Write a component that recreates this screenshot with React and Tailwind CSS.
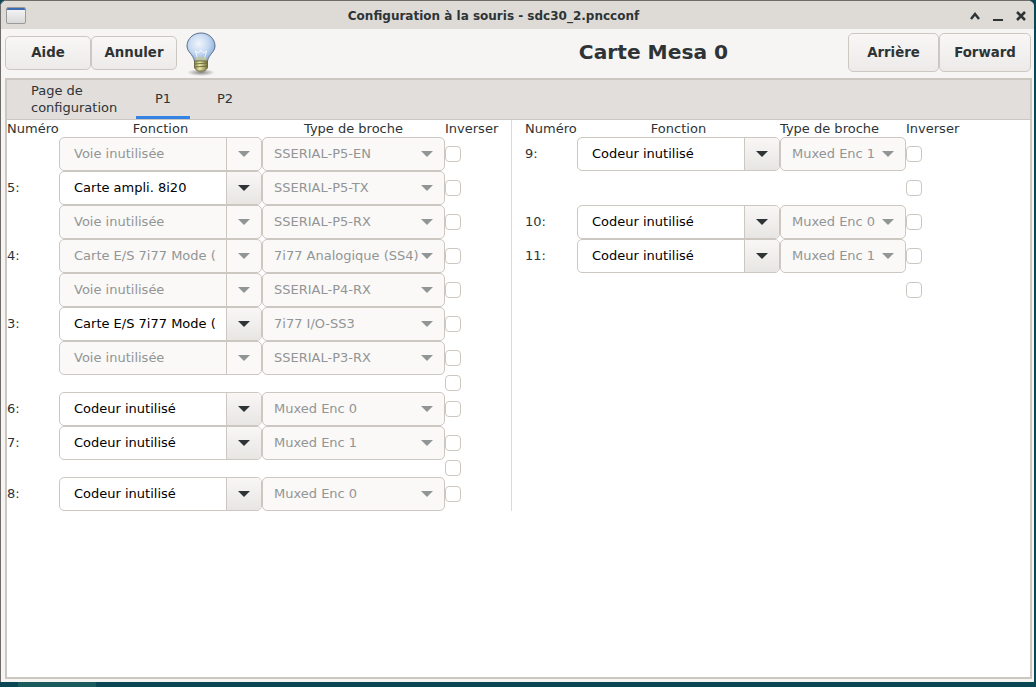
import React from "react";

const leftRows = [
  { h: 34, fn: "Voie inutilisée", type: "SSERIAL-P5-EN" },
  { h: 34, num: "5:", fn: "Carte ampli. 8i20", active: true, type: "SSERIAL-P5-TX" },
  { h: 34, fn: "Voie inutilisée", type: "SSERIAL-P5-RX" },
  { h: 34, num: "4:", fn: "Carte E/S 7i77 Mode (", type: "7i77 Analogique (SS4)" },
  { h: 34, fn: "Voie inutilisée", type: "SSERIAL-P4-RX" },
  { h: 34, num: "3:", fn: "Carte E/S 7i77 Mode (", active: true, type: "7i77 I/O-SS3" },
  { h: 34, fn: "Voie inutilisée", type: "SSERIAL-P3-RX" },
  { h: 17 },
  { h: 34, num: "6:", fn: "Codeur inutilisé", active: true, type: "Muxed Enc 0" },
  { h: 34, num: "7:", fn: "Codeur inutilisé", active: true, type: "Muxed Enc 1" },
  { h: 17 },
  { h: 34, num: "8:", fn: "Codeur inutilisé", active: true, type: "Muxed Enc 0" },
];

const rightRows = [
  { h: 34, num: "9:", fn: "Codeur inutilisé", active: true, type: "Muxed Enc 1" },
  { h: 34 },
  { h: 34, num: "10:", fn: "Codeur inutilisé", active: true, type: "Muxed Enc 0" },
  { h: 34, num: "11:", fn: "Codeur inutilisé", active: true, type: "Muxed Enc 1" },
  { h: 34 },
];

function Arrow({ dim }) {
  return (
    <svg width="12" height="6" viewBox="0 0 12 6" className="shrink-0">
      <path d="M0 0h12L6 6z" fill={dim ? "#929595" : "#2e3436"} />
    </svg>
  );
}

function FnCombo({ text, active }) {
  return (
    <div
      className={`flex h-full w-[203px] shrink-0 rounded-[5px] border border-[#cdc7c2] ${
        active ? "bg-white text-black" : "bg-[#faf9f8] text-[#929595]"
      }`}
    >
      <div className="flex-1 overflow-hidden whitespace-nowrap pl-[14px] pr-[16px] leading-[32px]">
        {text}
      </div>
      <div
        className={`flex w-[35px] items-center justify-center rounded-r-[4px] border-l border-[#cdc7c2] ${
          active ? "bg-gradient-to-b from-[#f8f7f6] to-[#e8e6e3]" : ""
        }`}
      >
        <Arrow dim={!active} />
      </div>
    </div>
  );
}

function TypeCombo({ text, width }) {
  return (
    <div
      className={`flex h-full ${width} shrink-0 items-center justify-between rounded-[5px] border border-[#cdc7c2] bg-[#faf9f8] pl-[11px] pr-[11px] text-[#929595]`}
    >
      <span className="overflow-hidden whitespace-nowrap">{text}</span>
      <Arrow dim />
    </div>
  );
}

function Check() {
  return <div className="h-[16px] w-[16px] shrink-0 rounded-[4px] border border-[#cdc7c2] bg-white" />;
}

function Row({ row, typeWidth }) {
  return (
    <div
      className={`flex ${row.h === 34 ? "h-[34px] items-center" : "h-[17px] items-start"}`}
    >
      <div className="w-[52px] shrink-0 text-[#2e3436]">{row.num}</div>
      {row.fn ? (
        <>
          <FnCombo text={row.fn} active={row.active} />
          <TypeCombo text={row.type} width={typeWidth} />
        </>
      ) : (
        <div className={typeWidth === "w-[183px]" ? "w-[386px]" : "w-[329px]"} />
      )}
      <Check />
    </div>
  );
}

function Header({ typeWidth, typeAlign }) {
  return (
    <div className="flex h-[17px] items-center text-[#2e3436]">
      <div className="w-[52px] shrink-0">Numéro</div>
      <div className="w-[203px] shrink-0 text-center">Fonction</div>
      <div className={`${typeWidth} shrink-0 whitespace-nowrap ${typeAlign}`}>Type de broche</div>
      <div>Inverser</div>
    </div>
  );
}

function Bulb() {
  return (
    <svg width="30" height="44" viewBox="0 0 30 44">
      <defs>
        <radialGradient id="glass" cx="0.42" cy="0.38" r="0.65">
          <stop offset="0" stopColor="#f1f6fc" />
          <stop offset="0.55" stopColor="#c6d9f1" />
          <stop offset="1" stopColor="#86abdd" />
        </radialGradient>
        <linearGradient id="base" x1="0" x2="1" y1="0" y2="0">
          <stop offset="0" stopColor="#8c8a4e" />
          <stop offset="0.4" stopColor="#e9e6a8" />
          <stop offset="1" stopColor="#77743f" />
        </linearGradient>
        <radialGradient id="shade">
          <stop offset="0" stopColor="#000" stopOpacity="0.45" />
          <stop offset="1" stopColor="#000" stopOpacity="0" />
        </radialGradient>
      </defs>
      <ellipse cx="15" cy="40.500" rx="14" ry="3.500" fill="url(#shade)" />
      <path
        d="M15 1C7 1 1 7 1 14c0 6 6 8 7.500 15h13C23 22 29 20 29 14 29 7 23 1 15 1z"
        fill="url(#glass)"
        stroke="#5b7189"
      />
      <path d="M11.500 27l-2-8 3 2 2.500-3 2.500 3 3-2-2 8" fill="none" stroke="#fff" strokeWidth="0.8" />
      <path d="M10 25h10l1 4H9z" fill="#c9c68a" opacity="0.7" />
      <path d="M8.500 29h13v7l-3 3h-7l-3-3z" fill="url(#base)" stroke="#5c5a2e" strokeWidth="0.8" />
      <path d="M8.500 32l13-1M8.500 35l13-1" stroke="#5c5a2e" strokeWidth="0.8" />
    </svg>
  );
}

function Btn({ children, className }) {
  return (
    <div
      className={`flex items-center justify-center rounded-[5px] border border-[#cdc7c2] bg-gradient-to-b from-[#f8f7f6] to-[#edebe9] text-[13.33px] font-bold text-[#2e3436] ${className}`}
    >
      {children}
    </div>
  );
}

function Tab({ children, active, className }) {
  return (
    <div
      className={`flex h-[39px] items-center border-b-[3px] leading-[17px] text-[#2e3436] ${
        active ? "border-[#3584e4]" : "border-transparent"
      } ${className}`}
    >
      {children}
    </div>
  );
}

export default function App() {
  return (
    <div className="flex h-[687px] w-[1036px] flex-col overflow-hidden bg-[#0b4655] text-[13px] font-['DejaVu_Sans',sans-serif]">
      <div className="mr-[2px] flex h-[682px] shrink-0 flex-col rounded-t-[6px] border-l border-t border-[#6e6c69] bg-[#f6f5f4]">
        {/* Title bar */}
        <div className="flex h-[28px] shrink-0 items-center rounded-t-[6px] bg-[#dedbd7] pl-[5px] pr-[8px]">
          <div className="mt-px h-[17px] w-[20px] overflow-hidden rounded-[2px] border border-[#9a9a9a] bg-gradient-to-b from-[#f7f7f7] to-[#d9d9d9]">
            <div className="h-[2px] bg-[#3d6bb0]" />
          </div>
          <div className="flex-1 pr-[9px] pt-[2px] text-center text-[12px] font-bold text-[#2e3436]">
            Configuration à la souris - sdc30_2.pncconf
          </div>
          <div className="flex items-center gap-[13px] pt-[2px]">
            <svg width="10" height="10" viewBox="0 0 10 10">
              <path d="M1 8l4-5 4 5" fill="none" stroke="#2e3436" strokeWidth="2.500" />
            </svg>
            <svg width="10" height="10" viewBox="0 0 10 10">
              <path d="M0 9h10" fill="none" stroke="#2e3436" strokeWidth="2" />
            </svg>
            <svg width="10" height="10" viewBox="0 0 10 10">
              <path d="M1 1l8 8M9 1l-8 8" fill="none" stroke="#2e3436" strokeWidth="2.500" />
            </svg>
          </div>
        </div>

        {/* Toolbar */}
        <div className="flex h-[49px] shrink-0 items-center pb-[2px] pl-[4px] pr-[3px]">
          <Btn className="mt-px h-[34px] w-[86px]">Aide</Btn>
          <Btn className="mt-px h-[34px] w-[86px]">Annuler</Btn>
          <div className="ml-[9px] mt-[3px] w-[30px]">
            <Bulb />
          </div>
          <div className="flex-1 pl-[243px] text-center text-[20.2px] font-bold text-[#2e3436]">
            Carte Mesa 0
          </div>
          <Btn className="h-[39px] w-[91px]">Arrière</Btn>
          <Btn className="h-[39px] w-[92px]">Forward</Btn>
        </div>

        {/* Notebook */}
        <div className="ml-[4px] mr-[2px] flex h-[601px] flex-col border-2 border-[#cdc7c2] bg-white">
          <div className="flex h-[40px] shrink-0 items-start border-b border-[#cdc7c2] bg-[#e1dedb] pl-[15px]">
            <Tab className="w-[114px] pl-[9px] pt-[2px]">
              <span>
                Page de
                <br />
                configuration
              </span>
            </Tab>
            <Tab active className="w-[54px] justify-center pt-px">P1</Tab>
            <Tab className="ml-[8px] w-[54px] justify-center pt-px">P2</Tab>
          </div>
          <div className="flex">
            <div className="flex w-[505px] shrink-0 flex-col border-r border-[#dcd9d6]">
              <Header typeWidth="w-[183px]" typeAlign="text-center" />
              {leftRows.map((row, i) => (
                <Row key={i} row={row} typeWidth="w-[183px]" />
              ))}
            </div>
            <div className="flex flex-col pl-[13px]">
              <Header typeWidth="w-[126px]" typeAlign="text-left" />
              {rightRows.map((row, i) => (
                <Row key={i} row={row} typeWidth="w-[126px]" />
              ))}
            </div>
          </div>
        </div>
      </div>
      <div className="flex h-[5px] shrink-0">
        <div className="ml-[18px] w-[78px] bg-[#1a5c5e]" />
      </div>
    </div>
  );
}
